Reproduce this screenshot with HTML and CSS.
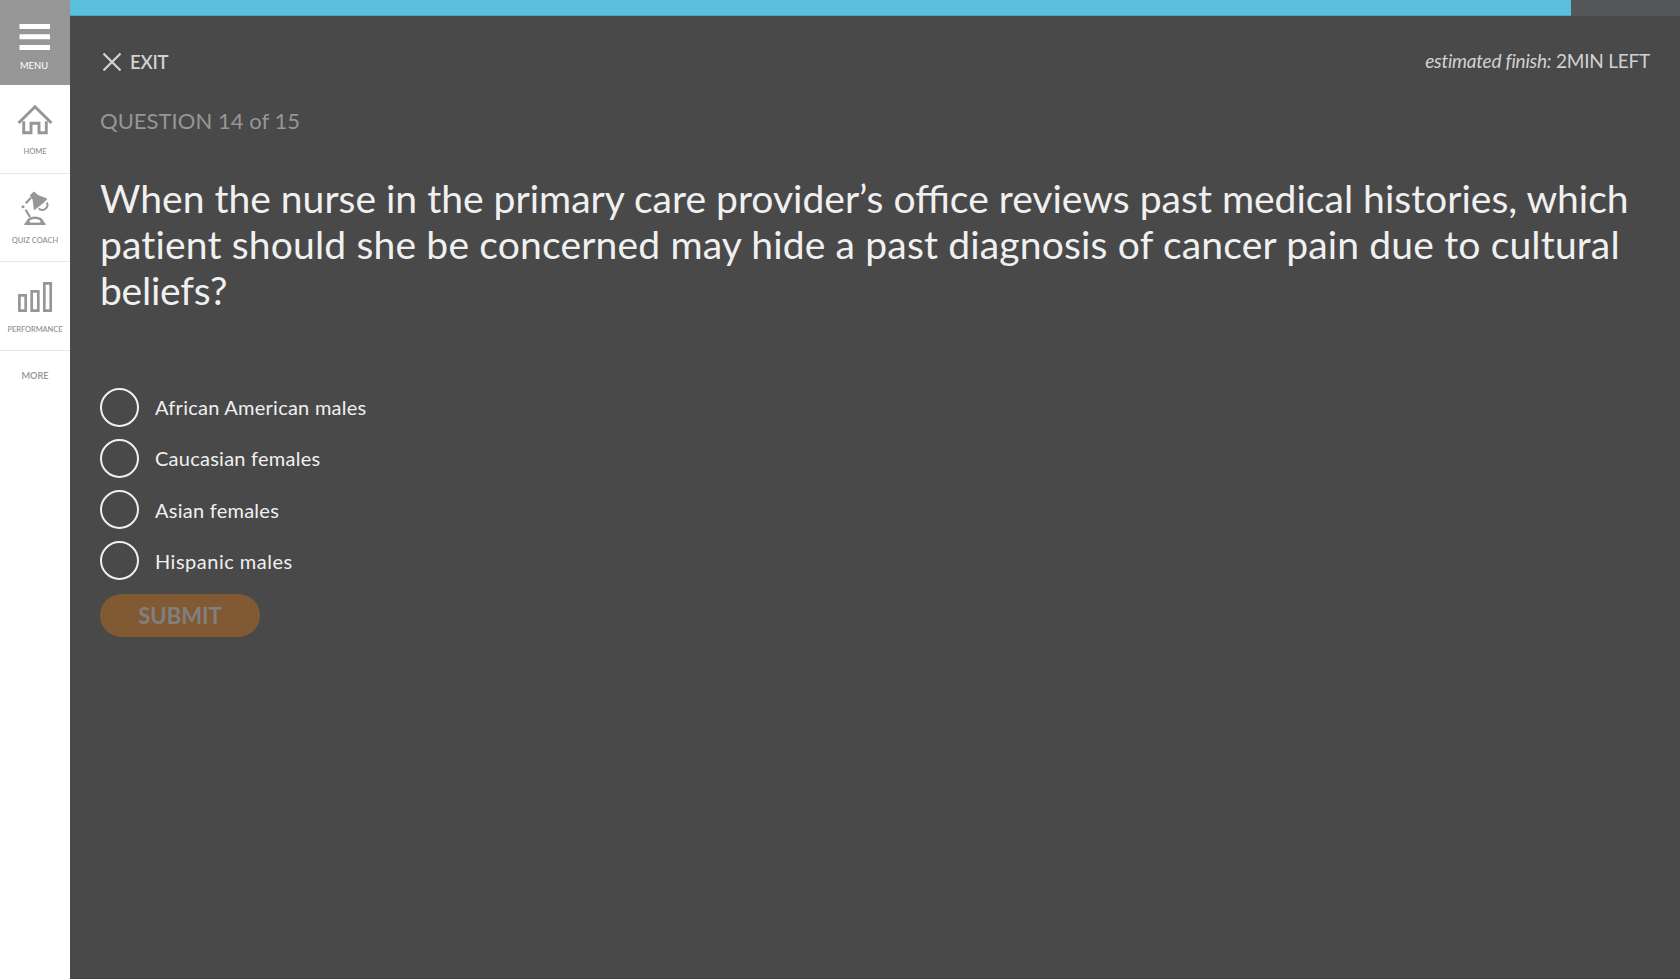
FILE: index.html
```html
<!DOCTYPE html>
<html lang="en">
<head>
<meta charset="utf-8">
<title>Quiz</title>
<link rel="stylesheet" href="styles.css">
</head>
<body>
<nav class="sidebar">
  <a class="nav-item nav-menu">
    <svg class="icon-menu" width="32" height="27" viewBox="0 0 32 27" fill="#fff"><path d="M.5 0h30.5v5H.5zM.5 10.3h30.5v5H.5zM.5 21h30.5v5H.5z"/></svg>
    <span class="menu-label">MENU</span>
  </a>
  <a class="nav-item nav-home">
    <svg width="36" height="32" viewBox="0 0 36 32" fill="none" stroke="#969696" stroke-width="3"><path d="M1.6 19 18 2.8 34.4 19"/><path d="M6.7 17.2V28.8H14V19.2H22V28.8H29.3V17.2" stroke-width="2.9"/></svg>
    <span class="nav-label">HOME</span>
  </a>
  <a class="nav-item nav-coach">
    <svg width="28" height="36" viewBox="0 0 28 36" fill="none" stroke="#969696">
      <path d="M8.8 4.5 12.8.4 17 3.9 26.5 7.7 22.7 11.7 13 19.5 11.6 8.5z" fill="#969696" stroke="none"/>
      <path d="M10 6.8 4.8 12.2M4.6 18.8 9 26" stroke-width="2.2"/>
      <circle cx="2" cy="15.7" r="1.5" fill="#969696" stroke="none"/>
      <path d="M25.8 11.4C27.8 15 25 18.7 21.5 19 19.7 19.1 18.5 18.4 17.8 17.4" stroke-width="2"/>
      <path d="M6 32C8 25 20 25 22 32" stroke-width="2.6"/>
      <path d="M3.2 34C3.6 32 4.6 31 6.1 30.6H21.9C23.4 31 24.4 32 24.8 34z" fill="#969696" stroke="none"/>
      <path d="M8.8 30.8H19.2" stroke="#fff" stroke-width="1.6"/>
    </svg>
    <span class="nav-label">QUIZ COACH</span>
  </a>
  <a class="nav-item nav-performance">
    <svg width="36" height="32" viewBox="0 0 36 32" fill="none" stroke="#969696" stroke-width="2.7"><path d="M2.4 14.4H8.7V29.6H2.4zM14.7 10.4H21.3V29.6H14.7zM27.3 2.4H33.7V29.6H27.3z"/></svg>
    <span class="nav-label nav-label-tight">PERFORMANCE</span>
  </a>
  <a class="nav-more">MORE</a>
</nav>
<main class="quiz">
  <div class="progress"><div class="progress-fill"></div></div>
  <header class="topbar">
    <a class="exit">
      <svg width="18" height="18" viewBox="0 0 18 18" stroke="#d2d2d2" stroke-width="2.3" stroke-linecap="round"><path d="M1.2 1.2 16.8 16.8M16.8 1.2 1.2 16.8"/></svg>
      <span>EXIT</span>
    </a>
    <div class="estimate"><em>estimated finish:</em> <span>2MIN LEFT</span></div>
  </header>
  <p class="counter">QUESTION 14 of 15</p>
  <h1 class="question">
    <span class="line">When the nurse in the primary care provider’s office reviews past medical histories, which</span>
    <span class="line line-wide">patient should she be concerned may hide a past diagnosis of cancer pain due to cultural</span>
    <span class="line line-tight">beliefs?</span>
  </h1>
  <div class="options">
    <label class="option option-raised"><i class="radio"></i><span class="answer">African American males</span></label>
    <label class="option option-raised"><i class="radio"></i><span class="answer">Caucasian females</span></label>
    <label class="option"><i class="radio"></i><span class="answer">Asian females</span></label>
    <label class="option"><i class="radio"></i><span class="answer answer-wide">Hispanic males</span></label>
  </div>
  <button class="submit" disabled>SUBMIT</button>
</main>
</body>
</html>
```
FILE: styles.css
```css
* { box-sizing: border-box; }
body {
  margin: 0;
  height: 979px;
  display: flex;
  overflow: hidden;
  background: #fff;
  font-family: Lato, "Open Sans", sans-serif;
}
svg { display: block; }
.sidebar { width: 70px; flex: none; color: #969696; }
.nav-item {
  display: flex;
  flex-direction: column;
  align-items: center;
  border-bottom: 1px solid #e6e6e6;
}
.nav-menu {
  height: 85px;
  padding-top: 24px;
  background: #969696;
  border: 0;
  color: #fff;
}
.menu-label { margin-top: 9px; padding-right: 2px; font-size: 9.4px; line-height: 12px; }
.nav-home { height: 89px; padding-top: 19px; gap: 11px; }
.nav-coach { height: 88px; padding-top: 17px; gap: 9px; }
.nav-performance { height: 89px; padding-top: 19px; gap: 12px; }
.nav-label { font-size: 7.5px; line-height: 10px; font-weight: 600; white-space: nowrap; }
.nav-label-tight { letter-spacing: -0.1px; }
.nav-more {
  display: block;
  padding-top: 18px;
  text-align: center;
  font-size: 9.2px;
  line-height: 14px;
  font-weight: 600;
}
.quiz {
  flex: 1;
  height: 979px;
  background: #494949;
  border-bottom: 1px solid #424242;
}
.progress { height: 16px; background: #555658; }
.progress-fill {
  width: 1501px;
  height: 16px;
  background: #5bc0de;
  border-bottom: 1px solid #4ea5bf;
}
.topbar {
  display: flex;
  justify-content: space-between;
  align-items: flex-start;
  padding: 35px 30px 0 33px;
  height: 86px;
}
.exit {
  display: flex;
  align-items: center;
  gap: 9px;
  color: #d2d2d2;
  font-size: 18.5px;
  line-height: 22px;
  font-weight: 600;
  letter-spacing: -0.2px;
}
.estimate {
  color: #d2d2d2;
  font-size: 19px;
  line-height: 20px;
  letter-spacing: -0.22px;
}
.counter {
  margin: 5px 30px 0;
  color: #969696;
  font-size: 22px;
  line-height: 28px;
  letter-spacing: 0.03px;
}
.question {
  margin: 40px 30px 0;
  color: #f0f0f0;
  font-size: 39.06px;
  line-height: 46px;
  font-weight: 400;
}
.line { display: block; white-space: nowrap; }
.line-wide { letter-spacing: 0.15px; }
.line-tight { letter-spacing: -0.25px; }
.options {
  display: grid;
  gap: 12px;
  margin: 75px 30px 0;
}
.option {
  display: flex;
  align-items: center;
  gap: 16px;
  height: 39px;
  color: #f0f0f0;
}
.radio {
  width: 39px;
  height: 39px;
  border: 2px solid #f0f0f0;
  border-radius: 50%;
}
.answer { font-size: 20px; line-height: 24px; letter-spacing: 0.25px; }
.answer-wide { letter-spacing: 0.5px; }
.option-raised .answer { padding-bottom: 2px; }
.submit {
  display: block;
  width: 160px;
  height: 43px;
  margin: 14px 30px 0;
  padding: 0;
  border: 0;
  border-radius: 22px;
  background: #815a33;
  color: #808080;
  font: 700 22px/43px Lato, "Open Sans", sans-serif;
}
```
